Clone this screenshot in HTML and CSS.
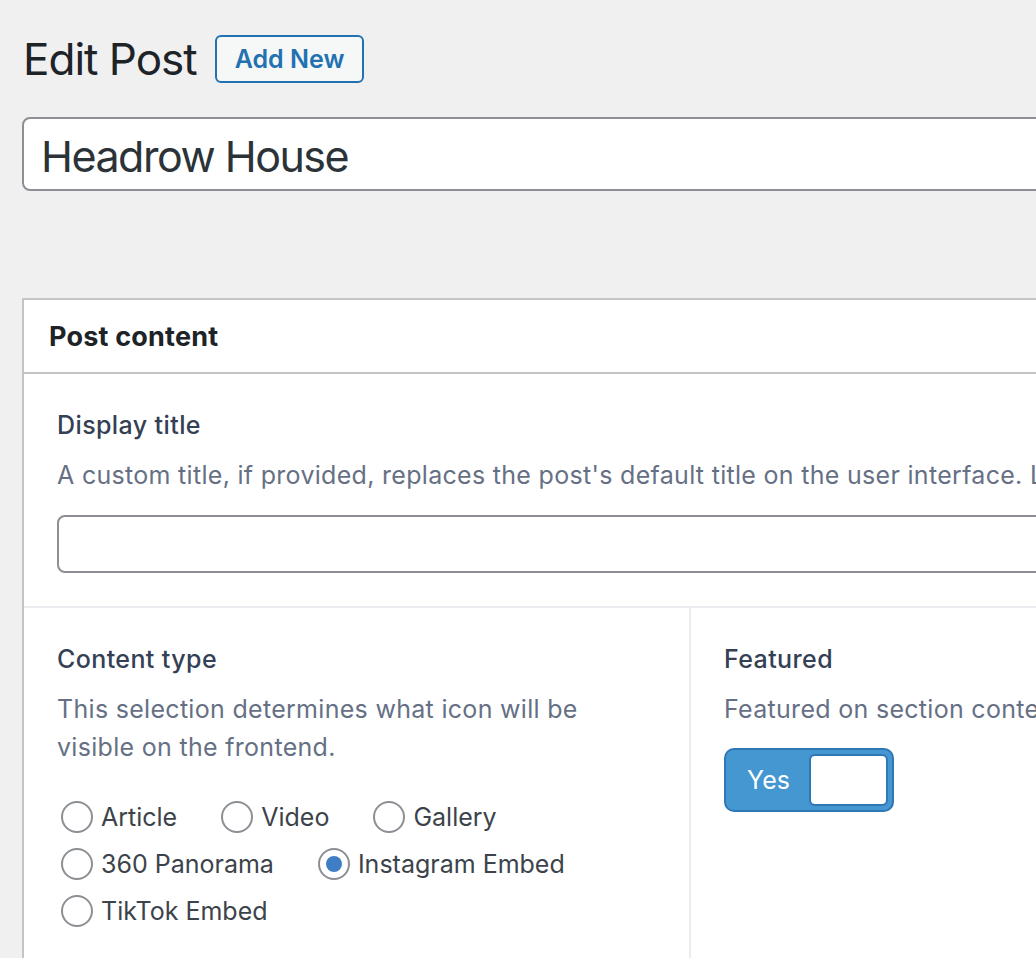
FILE: index.html
```html
<!DOCTYPE html>
<html lang="en">

<head>
    <meta charset="UTF-8">
    <meta name="viewport" content="width=device-width, initial-scale=1.0">
    <title>Edit Post</title>
    <link rel="stylesheet" href="styles.css">
</head>

<body>
    <div class="wrap">
        <div class="page-head">
            <h1>Edit Post</h1>
            <a href="#" class="page-title-action">Add New</a>
        </div>

        <div class="title-wrap">
            <input type="text" class="title-input" value="Headrow House">
        </div>

        <div class="postbox">
            <div class="postbox-header">
                <h2>Post content</h2>
            </div>

            <div class="field">
                <label class="field-label" for="display_title">Display title</label>
                <p class="description">A custom title, if provided, replaces the post's default title on the user interface. Leave blank to use the default title.</p>
                <input type="text" id="display_title" class="text-input">
            </div>

            <div class="field-row">
                <div class="field field-half">
                    <label class="field-label">Content type</label>
                    <p class="description">This selection determines what icon will be visible on the frontend.</p>
                    <ul class="radio-list">
                        <li><label><input type="radio" name="content_type"> Article</label></li>
                        <li><label><input type="radio" name="content_type"> Video</label></li>
                        <li><label><input type="radio" name="content_type"> Gallery</label></li>
                        <li><label><input type="radio" name="content_type"> 360 Panorama</label></li>
                        <li><label><input type="radio" name="content_type" checked> Instagram Embed</label></li>
                        <li><label><input type="radio" name="content_type"> TikTok Embed</label></li>
                    </ul>
                </div>
                <div class="field field-half">
                    <label class="field-label">Featured</label>
                    <p class="description">Featured on section content lists and the homepage.</p>
                    <div class="switch">
                        <span class="switch-on">Yes</span>
                        <span class="switch-slider"></span>
                    </div>
                </div>
            </div>
        </div>
    </div>
</body>

</html>
```

FILE: styles.css
```css
html, body {
    margin: 0;
    background-color: #f0f0f1;
    overflow: hidden;
}

body {
    font-family: Inter, "Noto Sans", sans-serif;
    color: #3c434a;
    height: 958px;
}

.wrap {
    width: 1500px;
    padding-left: 22px;
}

.page-head {
    display: flex;
    align-items: center;
    padding-top: 35px;
    height: 48px;
}

.page-head h1 {
    margin: 0;
    font-size: 44px;
    font-weight: 400;
    line-height: 48px;
    letter-spacing: -1px;
    color: #1d2327;
    padding-left: 1px;
}

.page-title-action {
    margin-left: 18px;
    height: 48px;
    box-sizing: border-box;
    padding: 0 18px;
    display: flex;
    align-items: center;
    border: 2px solid #2271b1;
    border-radius: 6px;
    background-color: #f6f7f7;
    color: #2271b1;
    font-size: 25px;
    font-weight: 600;
    text-decoration: none;
}

.title-wrap {
    margin-top: 34px;
}

.title-input {
    width: 100%;
    height: 74px;
    box-sizing: border-box;
    border: 2px solid #8c8f94;
    border-radius: 8px;
    background: #fff;
    padding: 4px 17px 0;
    font-family: inherit;
    font-size: 43px;
    letter-spacing: -1.5px;
    color: #2c3338;
    outline: none;
}

.postbox {
    margin-top: 107px;
    background: #fff;
    border: 2px solid #c3c4c7;
    height: 800px;
}

.postbox-header {
    height: 72px;
    display: flex;
    align-items: center;
    border-bottom: 2px solid #c3c4c7;
    padding-left: 25px;
}

.postbox-header h2 {
    margin: 0;
    font-size: 27px;
    font-weight: 700;
    letter-spacing: 0.2px;
    color: #1d2327;
}

.field {
    padding: 33px;
    border-bottom: 2px solid #eaecf0;
}

.field-label {
    display: block;
    font-size: 25px;
    font-weight: 500;
    line-height: 36px;
    letter-spacing: 0.4px;
    color: #344054;
}

.description {
    margin: 13px 0 0;
    font-size: 25px;
    line-height: 38px;
    letter-spacing: 0.3px;
    color: #667085;
    white-space: nowrap;
}

.text-input {
    display: block;
    margin-top: 21px;
    width: 100%;
    height: 58px;
    box-sizing: border-box;
    border: 2px solid #8c8f94;
    border-radius: 8px;
    outline: none;
}

.field-row {
    display: flex;
    min-height: 400px;
}

.field-half {
    border-bottom: none;
}

.field-half:first-child {
    width: 667px;
    box-sizing: border-box;
    border-right: 2px solid #eaecf0;
}

.field-half:first-child .description {
    white-space: normal;
}

.radio-list {
    list-style: none;
    margin: 27px 0 0;
    padding: 0;
    display: flex;
    flex-wrap: wrap;
}

.radio-list li {
    margin-right: 40px;
    height: 47px;
    display: flex;
    align-items: center;
}

.radio-list label {
    display: flex;
    align-items: center;
    font-size: 25px;
    color: #3c434a;
}

.radio-list input {
    appearance: none;
    -webkit-appearance: none;
    width: 32px;
    height: 32px;
    margin: 0 8px 0 4px;
    border: 2px solid #8c8f94;
    border-radius: 50%;
    background: #fff;
    box-sizing: border-box;
    position: relative;
}

.radio-list input:checked::after {
    content: "";
    position: absolute;
    left: 6px;
    top: 6px;
    width: 16px;
    height: 16px;
    border-radius: 50%;
    background: #3f7ec5;
}

.switch {
    margin-top: 20px;
    width: 170px;
    height: 64px;
    box-sizing: border-box;
    border: 2px solid #2f77b6;
    border-radius: 10px;
    background-color: #4497d0;
    display: flex;
    align-items: center;
    padding: 4px;
}

.switch-on {
    flex: 1;
    text-align: center;
    color: #fff;
    font-size: 25px;
    padding-right: 2px;
}

.switch-slider {
    width: 79px;
    height: 52px;
    box-sizing: border-box;
    border: 2px solid #2f77b6;
    border-radius: 6px;
    background: #fff;
}
```
